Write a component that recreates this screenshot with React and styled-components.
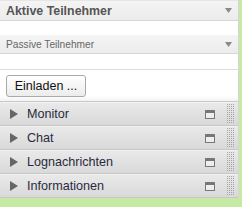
import React from "react";
import styled, { createGlobalStyle } from "styled-components";

const GlobalStyle = createGlobalStyle`
  html, body {
    margin: 0;
    padding: 0;
    background: #c6e9a3;
    font-family: "Liberation Sans", Arial, sans-serif;
  }
`;

const Page = styled.div`
  width: 242px;
  height: 207px;
  background: #c6e9a3;
  overflow: hidden;
`;

const Panel = styled.div`
  width: 239px;
  box-sizing: border-box;
  border-right: 1px solid #d4d4d4;
  background: #fff;
  display: flex;
  flex-direction: column;
`;

const GroupHeader = styled.div`
  height: ${(p) => (p.$bold ? 21 : 19)}px;
  box-sizing: border-box;
  border-top: 1px solid ${(p) => (p.$bold ? "#e6e6e6" : "#f4f4f4")};
  border-bottom: 1px solid #d6d6d6;
  background: linear-gradient(#f4f4f4, #ececec);
  display: flex;
  align-items: center;
  padding: 0 6px;
  color: ${(p) => (p.$bold ? "#555" : "#666")};
  font-size: ${(p) => (p.$bold ? "12.4px" : "10.2px")};
  font-weight: ${(p) => (p.$bold ? "bold" : "normal")};
`;

const GroupTitle = styled.span`
  flex: 1;
  white-space: nowrap;
`;

const GroupBody = styled.div`
  height: ${(p) => p.$h}px;
  background: #fff;
  border-bottom: ${(p) => (p.$line ? "1px solid #dcdcdc" : "none")};
`;

const ButtonArea = styled.div`
  height: 32px;
  box-sizing: border-box;
  padding: 5px 0 0 6px;
  background: linear-gradient(#fff 0, #fff 26px, #f0f0f0 32px);
  border-bottom: 1px solid #c9c9c9;
`;

const InviteButton = styled.button`
  width: 80px;
  height: 22px;
  box-sizing: border-box;
  border: 1px solid #a9a9a9;
  border-radius: 3px;
  background: linear-gradient(#ffffff, #ececec);
  font-family: "Liberation Sans", Arial, sans-serif;
  font-size: 12.5px;
  color: #111;
  padding: 0;
  text-align: center;
`;

const DockRow = styled.div`
  height: 24px;
  box-sizing: border-box;
  border-top: 1px solid #f2f2f2;
  border-bottom: 1px solid #c6c6c6;
  background: linear-gradient(#e9e9e9, #d9d9d9);
  display: flex;
  align-items: center;
  padding: 0 4px 0 10px;
  color: #2a2a3e;
  font-size: 12.6px;
`;

const Arrow = styled.span`
  width: 0;
  height: 0;
  border-top: 5px solid transparent;
  border-bottom: 5px solid transparent;
  border-left: 8px solid #666;
  margin-right: 9px;
`;

const DockTitle = styled.span`
  flex: 1;
  white-space: nowrap;
`;

const WindowIcon = styled.span`
  width: 10px;
  height: 9px;
  box-sizing: border-box;
  border: 1px solid #777;
  border-top-width: 3px;
  background: #eee;
  margin-right: 12px;
`;

const Down = () => (
  <svg width="7" height="5" viewBox="0 0 7 5">
    <polygon points="0,0 7,0 3.5,5" fill="#8a8a8a" />
  </svg>
);

const Grip = () => (
  <svg width="7" height="20" viewBox="0 0 7 20">
    <defs>
      <pattern id="dots" width="2" height="2" patternUnits="userSpaceOnUse">
        <rect width="1" height="1" fill="#a4a4a4" />
      </pattern>
    </defs>
    <rect width="7" height="20" fill="url(#dots)" />
  </svg>
);

const docks = ["Monitor", "Chat", "Lognachrichten", "Informationen"];

export default function App() {
  return (
    <Page>
      <GlobalStyle />
      <Panel>
        <GroupHeader $bold>
          <GroupTitle>Aktive Teilnehmer</GroupTitle>
          <Down />
        </GroupHeader>
        <GroupBody $h={14} />
        <GroupHeader>
          <GroupTitle>Passive Teilnehmer</GroupTitle>
          <Down />
        </GroupHeader>
        <GroupBody $h={15} $line />
        <ButtonArea>
          <InviteButton>Einladen ...</InviteButton>
        </ButtonArea>
        {docks.map((d) => (
          <DockRow key={d}>
            <Arrow />
            <DockTitle>{d}</DockTitle>
            <WindowIcon />
            <Grip />
          </DockRow>
        ))}
      </Panel>
    </Page>
  );
}
